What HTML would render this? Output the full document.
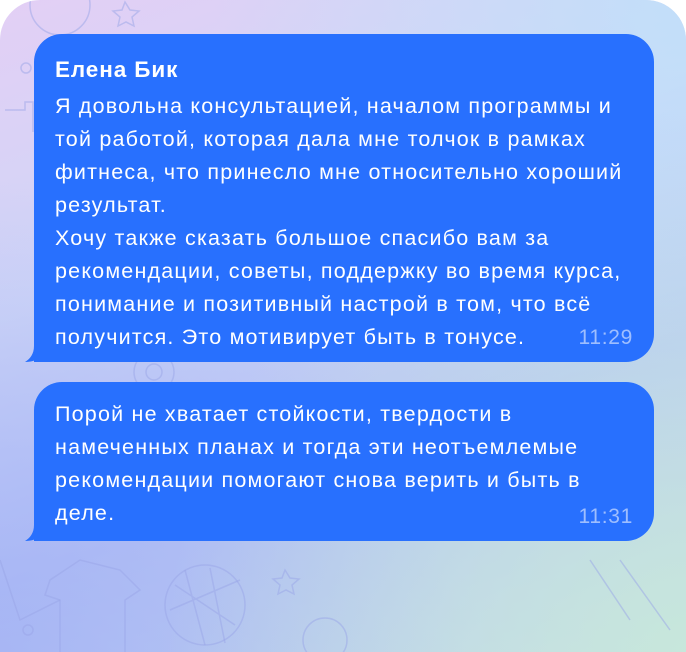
<!DOCTYPE html>
<html><head><meta charset="utf-8"><style>
html,body{margin:0;padding:0;background:#fff;width:686px;height:652px;overflow:hidden}
.bg{position:absolute;left:0;top:0;width:686px;height:652px;border-radius:40px 40px 0 0;overflow:hidden;
background:linear-gradient(160deg,#e3cff5 0%,#cfd6f7 35%,#b6c3f5 65%,#c4d8ec 100%)}
.bg2{position:absolute;inset:0;background:radial-gradient(circle at 100% 100%,rgba(200,235,215,.8),rgba(200,235,215,0) 55%),radial-gradient(circle at 100% 0%,rgba(190,225,250,.8),rgba(190,225,250,0) 50%),radial-gradient(circle at 0% 100%,rgba(160,175,245,.7),rgba(160,175,245,0) 50%)}
.b{position:absolute;left:34px;width:620px;background:#2870fe;border-radius:28px 28px 28px 0;color:#fff;font-family:"Liberation Sans",sans-serif;box-sizing:border-box;padding:0 21px}
.t{font-size:21.5px;line-height:33px;letter-spacing:1.2px;white-space:nowrap}
.n{font-weight:bold;font-size:22.5px;line-height:26px;letter-spacing:0.9px;margin-top:23px;margin-bottom:7px}
.tm{position:absolute;right:21px;font-size:21px;letter-spacing:0.7px;color:rgba(255,255,255,.55)}
.tail{position:absolute;left:-9px;bottom:0}
</style></head><body>
<div class="bg"><div class="bg2"></div>
<svg width="686" height="652" style="position:absolute;left:0;top:0" fill="none" stroke="#9aa6e8" stroke-opacity=".5" stroke-width="1.5">
<circle cx="60" cy="5" r="30"/><path d="M125 2l5 8 9 1-7 6 2 9-8-4-8 4 2-9-7-6 9-1z"/>
<circle cx="26" cy="68" r="5"/><path d="M5 110h20v-8h8v30"/>
<circle cx="154" cy="372" r="20"/><circle cx="154" cy="372" r="8"/>
<circle cx="205" cy="605" r="40"/><path d="M175 585l60 40M170 610l70-30M185 570l20 75M210 568l15 75"/>
<path d="M285 570l5 8 9 1-7 6 2 9-8-4-8 4 2-9-7-6 9-1z"/>
<path d="M50 580l30-20 40 10 20 20-15 10v60H60v-60l-15-5z"/>
<circle cx="28" cy="630" r="5"/><circle cx="325" cy="640" r="22"/>
<path d="M0 560l20 60 40-20"/><path d="M590 560l40 60M620 560l50 70"/>
</svg></div>
<div class="b" style="top:34px;height:328px">
<svg class="tail" width="20" height="24" viewBox="0 0 20 24"><path d="M9 0v8C9 16 5 21 0 24c7 0 12-2 15-5 3 3 5 5 5 5V0z" fill="#2870fe"/></svg>
<div class="n">Елена Бик</div>
<div class="t">Я довольна консультацией, началом программы и<br>той работой, которая дала мне толчок в рамках<br>фитнеса, что принесло мне относительно хороший<br>результат.<br>Хочу также сказать большое спасибо вам за<br>рекомендации, советы, поддержку во время курса,<br>понимание и позитивный настрой в том, что всё<br>получится. Это мотивирует быть в тонусе.</div>
<div class="tm" style="top:292px">11:29</div>
</div>
<div class="b" style="top:382px;height:159px">
<svg class="tail" width="20" height="24" viewBox="0 0 20 24"><path d="M9 0v8C9 16 5 21 0 24c7 0 12-2 15-5 3 3 5 5 5 5V0z" fill="#2870fe"/></svg>
<div class="t" style="margin-top:16px">Порой не хватает стойкости, твердости в<br>намеченных планах и тогда эти неотъемлемые<br>рекомендации помогают снова верить и быть в<br>деле.</div>
<div class="tm" style="top:123px">11:31</div>
</div>
</body></html>
